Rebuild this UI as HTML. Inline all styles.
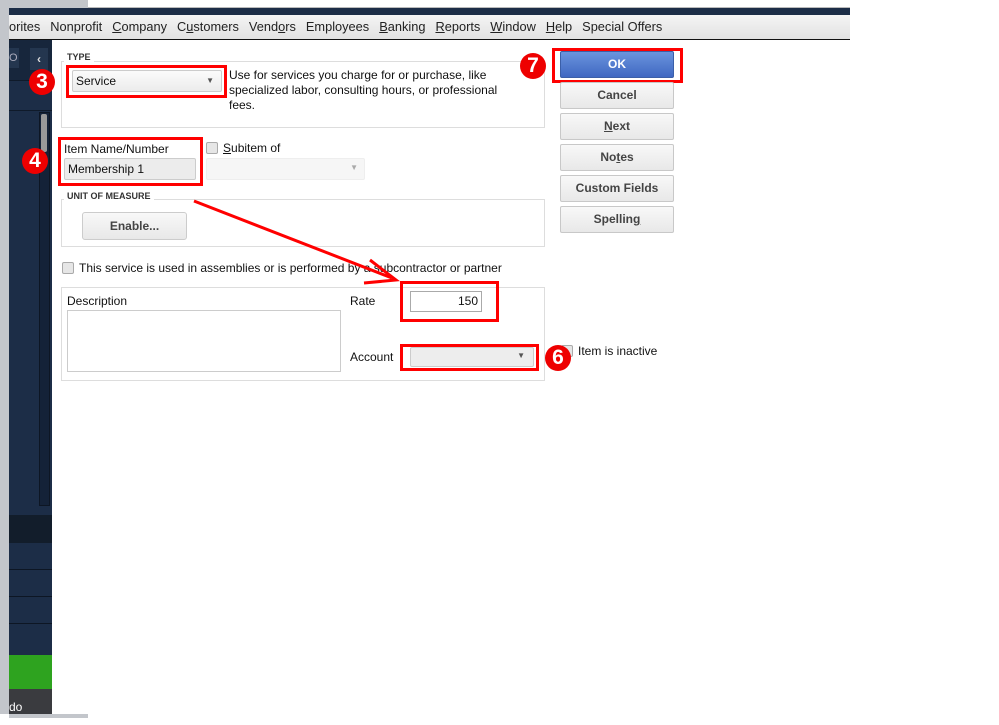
<!DOCTYPE html>
<html><head><style>
*{margin:0;padding:0;box-sizing:border-box}
body{width:999px;height:718px;position:relative;overflow:hidden;background:#fff;font-family:"Liberation Sans",Arial,sans-serif;font-size:12px;color:#111}
.a{position:absolute}
.btn{position:absolute;left:560px;width:114px;height:27px;border:1px solid #c8c8c8;border-radius:2px;background:linear-gradient(#f8f8f8,#e8e8e8);text-align:center;line-height:25px;font-weight:bold;color:#444}
.red{position:absolute;border:3px solid #f00}
.num{position:absolute;width:26px;height:26px;border-radius:50%;background:#e00;color:#fff;font-weight:bold;font-size:21px;text-align:center;line-height:26px}
.box{position:absolute;border:1px solid #ddd}
.cb{position:absolute;width:12px;height:12px;border:1px solid #aaa;border-radius:2px;background:#e6e6e6}
.menu span{margin-right:10px}
</style></head><body>
<div class="a" style="left:0;top:0;width:9px;height:718px;background:#c3c6cb"></div>
<div class="a" style="left:0;top:0;width:88px;height:8px;background:#c3c6cb"></div>
<div class="a" style="left:88px;top:0;width:762px;height:8px;background:#fff;border-bottom:1px solid #bbb"></div>
<div class="a" style="left:9px;top:8px;width:841px;height:7px;background:#1c2d47"></div>
<div class="a menu" style="left:9px;top:15px;width:841px;height:25px;background:linear-gradient(#f4f4f4,#e2e2e2);border-bottom:1px solid #111;line-height:24px;font-size:12.8px;color:#222;white-space:nowrap;padding-left:0"><span>orites</span><span>Nonprofit</span><span><u>C</u>ompany</span><span>C<u>u</u>stomers</span><span>Vend<u>o</u>rs</span><span>Employees</span><span><u>B</u>anking</span><span><u>R</u>eports</span><span><u>W</u>indow</span><span><u>H</u>elp</span><span>Special Offers</span></div>
<!-- sidebar -->
<div class="a" style="left:9px;top:40px;width:43px;height:674px;background:#1c2d47"></div>
<div class="a" style="left:9px;top:40px;width:43px;height:41px;background:#17263c;border-bottom:1px solid #0f1a2a"></div>
<div class="a" style="left:9px;top:48px;width:10px;height:20px;background:#24364f;color:#aab;font-size:11px;line-height:20px">O</div>
<div class="a" style="left:30px;top:48px;width:18px;height:22px;background:#24364f;color:#ddd;font-weight:bold;text-align:center;line-height:22px">‹</div>
<div class="a" style="left:9px;top:110px;width:43px;height:1px;background:#0f1a2a"></div>
<div class="a" style="left:39px;top:112px;width:11px;height:394px;background:#142238;border:1px solid #0d1624"></div>
<div class="a" style="left:41px;top:114px;width:6px;height:38px;background:#999;border-radius:2px"></div>
<div class="a" style="left:9px;top:515px;width:43px;height:28px;background:#121d2b"></div>
<div class="a" style="left:9px;top:569px;width:43px;height:1px;background:#0d1624"></div>
<div class="a" style="left:9px;top:596px;width:43px;height:1px;background:#0d1624"></div>
<div class="a" style="left:9px;top:623px;width:43px;height:1px;background:#0d1624"></div>
<div class="a" style="left:9px;top:655px;width:43px;height:34px;background:#2ea31f"></div>
<div class="a" style="left:9px;top:689px;width:43px;height:25px;background:#3a3b3f;color:#fff;font-size:12px;line-height:36px">do</div>
<div class="a" style="left:9px;top:714px;width:79px;height:4px;background:#c3c6cb"></div>
<div class="a" style="left:0;top:714px;width:9px;height:4px;background:#fff"></div>
<!-- dialog -->
<div class="box" style="left:61px;top:61px;width:484px;height:67px"></div>
<div class="a" style="left:64px;top:52px;padding:0 3px;background:#fff;font-size:9px;font-weight:bold;color:#333">TYPE</div>
<div class="a" style="left:72px;top:70px;width:150px;height:22px;border:1px solid #ccc;border-radius:2px;background:linear-gradient(#fbfbfb,#ececec);line-height:20px;padding-left:3px">Service<span style="position:absolute;right:7px;top:0;font-size:8px;color:#555">▼</span></div>
<div class="red" style="left:66px;top:65px;width:161px;height:33px"></div>
<div class="a" style="left:229px;top:68px;width:290px;line-height:15px">Use for services you charge for or purchase, like specialized labor, consulting hours, or professional fees.</div>
<div class="num" style="left:29px;top:69px">3</div>
<div class="a" style="left:64px;top:142px;font-size:12px">Item Name/Number</div>
<div class="a" style="left:64px;top:158px;width:132px;height:22px;border:1px solid #ccc;border-radius:2px;background:#ececec;line-height:20px;padding-left:3px">Membership 1</div>
<div class="red" style="left:58px;top:137px;width:145px;height:49px"></div>
<div class="num" style="left:22px;top:148px">4</div>
<div class="cb" style="left:206px;top:142px"></div>
<div class="a" style="left:223px;top:141px"><u>S</u>ubitem of</div>
<div class="a" style="left:206px;top:158px;width:159px;height:22px;border:1px solid #eee;border-radius:2px;background:#f6f6f6"><span style="position:absolute;right:6px;top:4px;font-size:8px;color:#aaa">▼</span></div>
<div class="box" style="left:61px;top:199px;width:484px;height:48px"></div>
<div class="a" style="left:64px;top:191px;padding:0 3px;background:#fff;font-size:9px;font-weight:bold;color:#333">UNIT OF MEASURE</div>
<div class="a" style="left:82px;top:212px;width:105px;height:28px;border:1px solid #ccc;border-radius:3px;background:linear-gradient(#f8f8f8,#e8e8e8);text-align:center;line-height:26px;font-weight:bold;color:#444">Enable...</div>
<div class="cb" style="left:62px;top:262px"></div>
<div class="a" style="left:79px;top:261px">This service is used in assemblies or is performed by a subcontractor or partner</div>
<div class="box" style="left:61px;top:287px;width:484px;height:94px"></div>
<div class="a" style="left:67px;top:294px">Description</div>
<div class="box" style="left:67px;top:310px;width:274px;height:62px;border-color:#ccc"></div>
<div class="a" style="left:350px;top:294px">Rate</div>
<div class="a" style="left:410px;top:291px;width:72px;height:21px;border:1px solid #aaa;text-align:right;line-height:19px;padding-right:3px">150</div>
<div class="red" style="left:400px;top:281px;width:99px;height:41px"></div>
<div class="a" style="left:350px;top:350px">Account</div>
<div class="a" style="left:410px;top:347px;width:124px;height:20px;border:1px solid #ccc;border-radius:2px;background:#ededed"><span style="position:absolute;right:8px;top:3px;font-size:8px;color:#555">▼</span></div>
<div class="red" style="left:400px;top:344px;width:139px;height:27px"></div>
<div class="cb" style="left:561px;top:345px"></div>
<div class="num" style="left:545px;top:345px">6</div>
<div class="a" style="left:578px;top:344px">Item is inactive</div>
<div class="a" style="left:560px;top:51px;width:114px;height:27px;border:1px solid #3b5fa8;border-radius:2px;background:linear-gradient(#6b94dd,#3f68c2);color:#fff;text-align:center;line-height:25px;font-weight:bold">OK</div>
<div class="red" style="left:552px;top:48px;width:131px;height:35px"></div>
<div class="num" style="left:520px;top:53px">7</div>
<div class="btn" style="top:82px">Cancel</div>
<div class="btn" style="top:113px"><u>N</u>ext</div>
<div class="btn" style="top:144px">No<u>t</u>es</div>
<div class="btn" style="top:175px">Custom Fields</div>
<div class="btn" style="top:206px">Spellin<u>g</u></div>
<svg class="a" style="left:0;top:0" width="999" height="718"><line x1="194" y1="201" x2="392" y2="278" stroke="#f00" stroke-width="3"/><polyline points="370,260 396,280 364,283" fill="none" stroke="#f00" stroke-width="3"/></svg>
</body></html>
